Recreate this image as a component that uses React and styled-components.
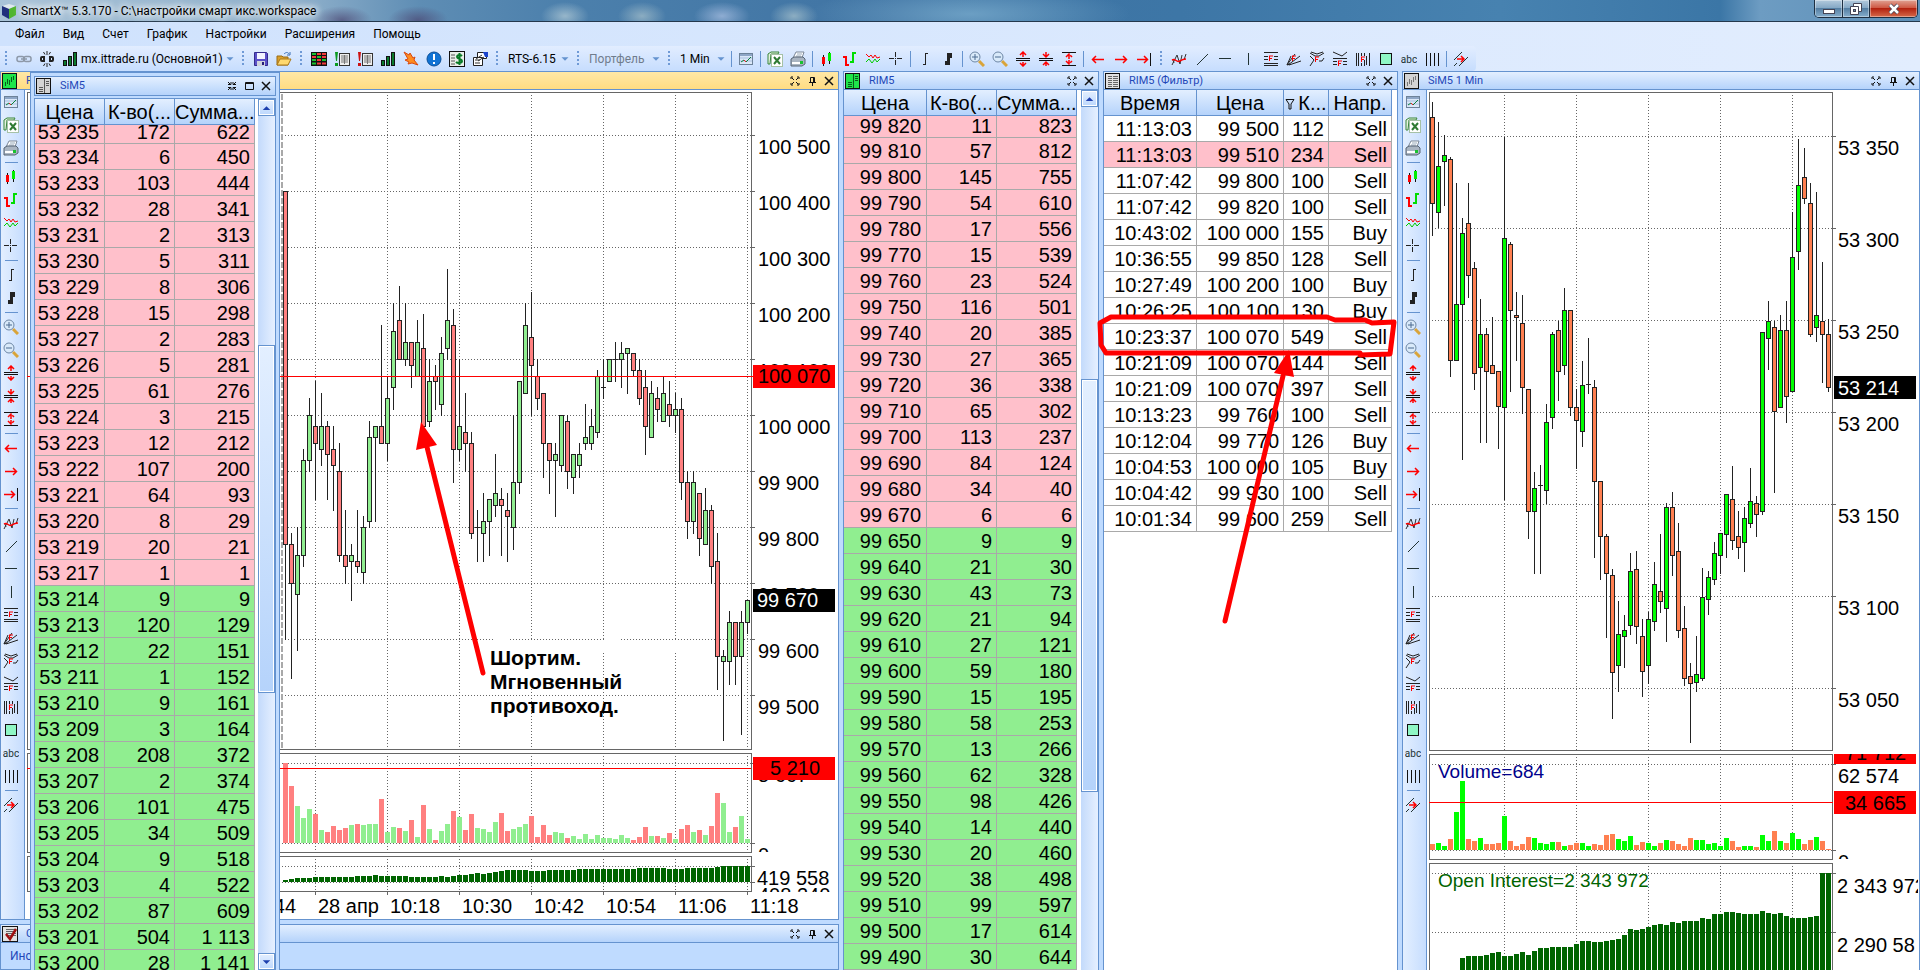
import React from 'react';
import styled, { createGlobalStyle } from 'styled-components';

const GlobalStyle = createGlobalStyle`
* { box-sizing: border-box; }
body {
margin: 0;
overflow: hidden;
background: #bfdbff;
}
button, select {
font: inherit;
color: inherit;
}
`;

const UI_FONT = 'Roboto, "Noto Sans", sans-serif';
const DATA_FONT = '"Liberation Sans", Arial, sans-serif';
const LINE = '#6593cf';

const Page = styled.div`
display: flex;
flex-direction: column;
height: 100vh;
overflow: hidden;
font-family: ${UI_FONT};
font-size: 12px;
color: #000;
`;

const TitleBar = styled.header`
display: flex;
align-items: center;
flex: none;
height: 22px;
padding-left: 2px;
border-bottom: 1px solid #24384d;
background:
radial-gradient(ellipse 30px 14px at 342px 20px, #4b4470b0, transparent),
radial-gradient(ellipse 30px 14px at 418px 20px, #4b4470b0, transparent),
radial-gradient(ellipse 24px 14px at 565px 16px, #b9cfd8b0, transparent),
radial-gradient(ellipse 24px 14px at 642px 16px, #a9c2ccb0, transparent),
radial-gradient(ellipse 28px 14px at 722px 16px, #a6bde0c0, transparent),
radial-gradient(ellipse 24px 14px at 794px 16px, #adc6cfb0, transparent),
radial-gradient(ellipse 160px 30px at 970px 14px, #86b8d6a0, transparent),
linear-gradient(90deg, #a9c3d8 0, #8fb0cb 300px, #5e8db4 420px, #4c80ac 560px, #3f73a3 900px, #3d76a6 1180px, #4782b0 1500px, #3b76a6 1720px, #6d9cc2 1760px, #5d8fb8 100%);
`;
const TitleLogo = styled.svg`
width: 14px;
height: 16px;
`;
const WindowTitle = styled.h1`
flex: 1;
margin: 0 0 0 5px;
font-size: 12px;
line-height: 20px;
font-weight: normal;
text-shadow: 0 0 6px #fff, 0 0 8px #fff, 0 0 10px #fff;
`;
const WindowButtons = styled.div`
display: flex;
align-self: flex-start;
height: 18px;
margin-right: 2px;
border: 1px solid #1d2f42;
border-top: 0;
border-radius: 0 0 5px 5px;
overflow: hidden;
`;
const WindowButton = styled.button`
display: flex;
align-items: center;
justify-content: center;
width: ${(props) => (props.$close ? '48px' : '27px')};
padding: 0;
border: 0;
border-left: ${(props) => (props.$first ? '0' : '1px solid #1d2f42')};
background: ${(props) => (props.$close
    ? 'linear-gradient(#e0a293, #cf5a45 45%, #b3220f 50%, #d5694a)'
    : 'linear-gradient(#b3cadd, #86a9c6 45%, #557fa3 50%, #86aecd)')};
box-shadow: inset 0 0 0 1px #ffffff60;
`;

const MenuBar = styled.nav`
display: flex;
align-items: center;
flex: none;
height: 24px;
padding: 0 6px;
background: linear-gradient(90deg, #cfe2fd, #e2edfe);
`;
const MenuItem = styled.button`
height: 22px;
padding: 0 9px;
border: 0;
background: transparent;
`;

const ToolBar = styled.div`
display: flex;
align-items: center;
flex: none;
height: 25px;
background: linear-gradient(90deg, #cfe2fd, #e2edfe);
`;
const ToolStrip = styled.div`
display: flex;
align-items: center;
height: 25px;
padding-right: 4px;
border-radius: 0 4px 4px 0;
background: linear-gradient(#e2edff, #c6ddfe);
`;
const ToolButton = styled.button`
display: flex;
align-items: center;
justify-content: center;
flex: none;
width: 23px;
height: 23px;
padding: 0;
border: 0;
background: transparent;
`;
const Grip = styled.span`
flex: none;
width: 12px;
height: 16px;
background: repeating-linear-gradient(#6f9ad6 0 2px, transparent 2px 4px) center / 2px 15px no-repeat;
`;
const Divider = styled.span`
flex: none;
width: ${(props) => (props.$flat ? '13px' : '6px')};
height: ${(props) => (props.$flat ? '6px' : '16px')};
background: linear-gradient(${LINE}, ${LINE}) center / ${(props) => (props.$flat ? '13px 1px' : '1px 16px')} no-repeat;
`;
const Combo = styled.label`
display: flex;
align-items: center;
flex: none;
width: ${(props) => props.$width}px;
color: ${(props) => (props.$dim ? '#707c8c' : '#000')};
`;
const ComboSelect = styled.select`
flex: 1;
min-width: 0;
height: 20px;
padding: 0 0 0 ${(props) => (props.$flush ? '0' : '5px')};
border: 0;
background: transparent;
appearance: none;
`;

const Workspace = styled.main`
position: relative;
display: grid;
grid-template-columns: minmax(0, 839fr) 256px 295px minmax(0, 518fr);
column-gap: 4px;
flex: 1;
min-height: 0;
background: #bfdbff;
`;
const Column = styled.div`
position: relative;
display: flex;
flex-direction: column;
gap: 4px;
min-width: 0;
min-height: 0;
`;
const Panel = styled.section`
display: flex;
flex-direction: column;
flex: ${(props) => (props.$docked ? 'none' : '1')};
min-height: 0;
height: ${(props) => (props.$docked ? '46px' : 'auto')};
border: 1px solid ${LINE};
border-bottom-width: ${(props) => (props.$open ? '0' : '1px')};
background: ${(props) => (props.$docked ? '#bfdbff' : '#fff')};
`;
const PanelHeader = styled.div`
display: flex;
align-items: center;
flex: none;
height: 18px;
padding: 0 1px;
border-bottom: 1px solid ${LINE};
background: ${(props) => (props.$active
    ? 'linear-gradient(#ffe8a6, #ffdc82)'
    : 'linear-gradient(#e3efff, #b5d3fb)')};
`;
const PanelTitle = styled.h2`
flex: 1;
margin: 0 0 0 8px;
overflow: hidden;
font-size: 11px;
line-height: 16px;
font-weight: normal;
white-space: nowrap;
color: #1f48b8;
`;
const PanelButton = styled.button`
display: flex;
align-items: center;
justify-content: center;
width: 17px;
height: 16px;
padding: 0;
border: 0;
background: transparent;
`;
const PanelBody = styled.div`
display: flex;
flex: 1;
min-height: 0;
overflow: hidden;
`;
const TabLabel = styled.button`
align-self: flex-start;
height: 26px;
padding: 0 9px;
border: 0;
background: transparent;
color: #1f48b8;
`;

// The order book that floats over the left chart.
const FloatingWindow = styled.section`
position: absolute;
top: 1px;
bottom: 0;
left: 30px;
display: flex;
flex-direction: column;
gap: 2px;
width: 250px;
padding: 3px 3px 0;
border: 1px solid ${LINE};
border-bottom: 0;
background: #bfdbff;
`;
const FloatingHeader = styled(PanelHeader)`
height: 20px;
border: 1px solid ${LINE};
`;
const FloatingBody = styled(PanelBody)`
border: 1px solid ${LINE};
border-bottom: 0;
background: #fff;
`;

const SideTools = styled.div`
display: flex;
flex-direction: column;
align-items: center;
flex: none;
width: 24px;
padding-right: 3px;
border-right: 1px solid ${LINE};
background: linear-gradient(90deg, #e3efff, #c6ddfe);
`;

const TableArea = styled.div`
flex: 1;
min-width: 0;
overflow: hidden;
`;
const DataTable = styled.table`
table-layout: fixed;
width: ${(props) => props.$width}px;
border-collapse: separate;
border-spacing: 0;
font-family: ${DATA_FONT};
font-size: 20px;
`;
const HeadCell = styled.th`
height: 26px;
padding: 1px 0;
border-right: 1px solid ${LINE};
border-bottom: 1px solid ${LINE};
background: linear-gradient(#e3efff, #b5d3fb);
font-weight: normal;
line-height: 22px;
text-align: center;
white-space: nowrap;
`;
const Cell = styled.td`
height: ${(props) => props.$height || 26}px;
padding: 1px 4px 0 0;
border-right: 1px solid #a9a9a9;
border-bottom: 1px solid #a9a9a9;
background: ${(props) => props.$fill || '#fff'};
line-height: ${(props) => (props.$height ? props.$height * 2 - 26 : 24)}px;
text-align: right;
vertical-align: top;
white-space: nowrap;
&:first-child {
padding-right: ${(props) => (props.$wide ? '5px' : '4px')};
}
`;
const FilterMark = styled.svg`
width: 10px;
height: 12px;
margin-right: 3px;
`;

const ScrollTrack = styled.div`
display: flex;
flex-direction: column;
flex: none;
width: 17px;
background: linear-gradient(90deg, #c3dafb, #e6f0ff);
`;
const ScrollArrow = styled.button`
display: flex;
align-items: center;
justify-content: center;
flex: none;
height: 17px;
padding: 0;
border: 1px solid ${LINE};
box-shadow: inset 0 0 0 1px #fff;
background: linear-gradient(#e3efff, #bcd7fd);
`;
const ScrollSpace = styled.div`
flex: ${(props) => props.$grow};
`;
const ScrollThumb = styled.div`
flex: ${(props) => props.$grow};
border: 1px solid ${LINE};
box-shadow: inset 0 0 0 1px #fff;
background: linear-gradient(#e3efff, #b5d3fb);
`;

const ChartSvg = styled.svg`
flex: 1;
min-width: 0;
height: 100%;
font-family: ${DATA_FONT};
font-size: 20px;
`;
const Markup = styled.svg`
position: absolute;
top: 0;
left: 0;
width: 100%;
height: 100%;
overflow: visible;
pointer-events: none;
`;

/* ---------- icons, all on a 16x16 canvas ---------- */

const fibF = (x, y) => (
  <path d={`M${x} ${y}h4M${x + 0.5} ${y}v5M${x} ${y + 2.5}h3`} stroke="#f00" fill="none" />
);

const ICONS = {
  link: (
    <g fill="none" stroke="#8d98a8" strokeWidth="1.5">
      <rect x="1" y="5.5" width="7" height="5" rx="2" />
      <rect x="8" y="5.5" width="7" height="5" rx="2" />
      <path d="M5 8h6" />
    </g>
  ),
  unlink: (
    <g fill="none" stroke="#222" strokeWidth="2">
      <path d="M6 6H3a1 1 0 0 0-1 1v2a1 1 0 0 0 1 1h3M10 6h3a1 1 0 0 1 1 1v2a1 1 0 0 1-1 1h-3M4 8h2M10 8h2" />
      <path d="M8 0v4M4.500 1l1.500 2.500M11.500 1L10 3.500M8 12v4M4.500 15l1.500-2.500M11.500 15L10 12.500" strokeWidth="1" />
    </g>
  ),
  bars: (
    <g fill="#0a7a2b" stroke="#111">
      <rect x="1.5" y="9.5" width="3" height="5" />
      <rect x="6.5" y="5.5" width="3" height="9" />
      <rect x="11.5" y="1.5" width="3" height="13" />
    </g>
  ),
  save: (
    <g>
      <path d="M1.5 1.5h12l1 1v12h-13z" fill="#5a50c8" stroke="#332a8c" />
      <rect x="4" y="2" width="8" height="6" fill="#f2f4ff" />
      <rect x="4" y="10" width="8" height="5" fill="#cfd3dc" />
      <rect x="9" y="11" width="2" height="3" fill="#251c7a" />
    </g>
  ),
  open: (
    <g>
      <path d="M1 5h5l1 1h5v8H1z" fill="#d99f2b" stroke="#9a6a12" />
      <path d="M4 8h11l-3 6H1z" fill="#ffd970" stroke="#a9781b" />
      <path d="M8 3c2-2 4-2 5 0M14 1v3h-3" stroke="#3b71b8" fill="none" />
    </g>
  ),
  quotes: (
    <g>
      <rect x="0" y="1" width="16" height="14" fill="#111" />
      <path d="M1 3h4M1 9h4M1 12.500h4M6 6h4M11 9h4" stroke="#19c22f" strokeWidth="2" />
      <path d="M6 3h4M11 3h4M1 6h4M11 6h4M6 9h4M6 12.500h4M11 12.500h4" stroke="#f13b3b" strokeWidth="2" />
    </g>
  ),
  orderBuy: (
    <g>
      <rect x="5.5" y="2.5" width="10" height="12" fill="#eee" stroke="#333" />
      <path d="M7 5h7M7 7h7M7 9h7M7 11h7M10.5 4v9" stroke="#777" />
      <path d="M1 1h3l-1 9H2zM1 12h3v3H1z" fill="#0a9a20" />
    </g>
  ),
  orderSell: (
    <g>
      <rect x="5.5" y="2.5" width="10" height="12" fill="#eee" stroke="#333" />
      <path d="M7 5h7M7 7h7M7 9h7M7 11h7M10.5 4v9" stroke="#777" />
      <path d="M1 1h3l-1 9H2zM1 12h3v3H1z" fill="#c11" />
    </g>
  ),
  flash: <path d="M1 1l5 3 1-2 3 5 2-1-1 3 4 5-6-2-4 1 1-2-4-2 3-1z" fill="#ff8c1f" stroke="#d9480f" />,
  alert: (
    <g>
      <circle cx="8" cy="8" r="7" fill="#1173d4" stroke="#0b4f97" />
      <path d="M7 3h2v6H7zM7 11h2v2H7z" fill="#fff" />
    </g>
  ),
  money: (
    <g>
      <rect x="0.5" y="0.5" width="15" height="15" fill="#e9efe9" stroke="#111" />
      <path d="M2 4h4M2 7h4M2 10h4M2 13h4" stroke="#555" />
      <path d="M13 5c-2-2-5-1-5 1s5 2 5 4-4 3-6 1M10.500 2v12" stroke="#087a25" strokeWidth="2" fill="none" />
    </g>
  ),
  report: (
    <g>
      <path d="M5.500 1.500h9v6h-9z" fill="#fff" stroke="#222" />
      <path d="M11 1h5v5h-3z" fill="#1a43cc" />
      <path d="M1.500 6.500h9v8h-9z" fill="#fff" stroke="#222" />
      <path d="M3 9h5M3 12h5M4 8l6-4M6 10l6-4" stroke="#333" />
    </g>
  ),
  chartWindow: (
    <g>
      <rect x="1.500" y="2.500" width="13" height="11" fill="#dbe8f8" stroke="#6d8299" />
      <path d="M2 4h12" stroke="#8ea6c6" strokeWidth="2" />
      <path d="M2 7h12M2 10h12" stroke="#a9bfe0" />
      <path d="M3 11l3-2 2 2 5-5" stroke="#0b7f39" fill="none" />
      <path d="M6 9l2 2" stroke="#e22" />
    </g>
  ),
  excel: (
    <g>
      <path d="M4 1h8l-1 2H4L3 13H1V3z" fill="#e5f3e0" stroke="#38853b" />
      <rect x="4.500" y="3.500" width="11" height="12" fill="#fff" stroke="#a6c1a6" />
      <path d="M7 6l6 7M13 6l-6 7" stroke="#2f7a33" strokeWidth="2" />
    </g>
  ),
  printer: (
    <g>
      <path d="M6 1h8l-2 6H3z" fill="#fff" stroke="#7b8797" />
      <path d="M7 3h5M6 5h5" stroke="#9ab" />
      <path d="M1 8l3-2h9l2 2v5l-3 2H1z" fill="#aab5c2" stroke="#566474" />
      <path d="M2 12h9" stroke="#fff" strokeWidth="2" />
      <rect x="10" y="10" width="3" height="3" fill="#19c22f" />
    </g>
  ),
  candles: (
    <g>
      <path d="M4.500 4v11M10.500 1v12" stroke="#111" />
      <rect x="3" y="6" width="3" height="7" fill="#f00" />
      <rect x="9" y="2" width="3" height="8" fill="#0e0" />
    </g>
  ),
  ohlc: (
    <g fill="none" strokeWidth="2">
      <path d="M1 6h3M4 5v10M4 14h3" stroke="#f00" />
      <path d="M8 11h3M11 12V1M11 2h3" stroke="#0d0" />
    </g>
  ),
  zigzag: (
    <g fill="none">
      <path d="M1 3l3 3 2-2 2 3 2-3 2 3 3-1" stroke="#f00" />
      <path d="M1 11l3-3 3 4 3-4 2 3 3-3" stroke="#0c0" />
    </g>
  ),
  cross: <path d="M7.500 1v5M7.500 9v5M1 7.500h5M9 7.500h5M7 7.500h1" stroke="#222" />,
  thinBar: <path d="M8.500 2v12M8 2.500h3M6 13.500h3" stroke="#222" />,
  thickBar: <path d="M7 2h5v5h-2v7H5v-4h2z" fill="#222" />,
  zoomIn: (
    <g>
      <path d="M10 10l5 5" stroke="#d9a43a" strokeWidth="3" />
      <circle cx="6" cy="6" r="5" fill="#d9eafa" stroke="#6e87a5" />
      <path d="M6 3v6M3 6h6" stroke="#4a6a90" />
    </g>
  ),
  zoomOut: (
    <g>
      <path d="M10 10l5 5" stroke="#d9a43a" strokeWidth="3" />
      <circle cx="6" cy="6" r="5" fill="#d9eafa" stroke="#6e87a5" />
      <path d="M3 6h6" stroke="#4a6a90" />
    </g>
  ),
  expand: (
    <g fill="none">
      <path d="M1 7.500h14M1 9.500h14" stroke="#111" />
      <path d="M8 6V1M5 4l3-3 3 3M8 11v4M5 12l3 3 3-3" stroke="#f00" strokeWidth="1.500" />
    </g>
  ),
  shrink: (
    <g fill="none">
      <path d="M1 7.500h14M1 9.500h14" stroke="#111" />
      <path d="M8 1v5M5 3l3 3 3-3M8 15v-4M5 14l3-3 3 3" stroke="#f00" strokeWidth="1.500" />
    </g>
  ),
  fit: (
    <g fill="none">
      <path d="M1 1.500h14M1 14.500h14" stroke="#111" />
      <path d="M8 3v10M5 6l3-3 3 3M5 10l3 3 3-3" stroke="#f00" strokeWidth="1.500" strokeDasharray="5 1" />
    </g>
  ),
  left: <path d="M14 8.500H3M6 5L2.500 8.500 6 12" stroke="#f00" strokeWidth="1.500" fill="none" />,
  right: <path d="M2 8.500h11M10 5l3.500 3.500L10 12" stroke="#f00" strokeWidth="1.500" fill="none" />,
  end: (
    <g fill="none">
      <path d="M1 8.500h10M8 5l3.500 3.500L8 12" stroke="#f00" strokeWidth="1.500" />
      <path d="M14.500 2v13" stroke="#111" />
    </g>
  ),
  indicator: (
    <g fill="none">
      <path d="M1 14L6 4l3 9 2-9M13 9l2-6M2 9l1 3" stroke="#333" />
      <path d="M1 9c4-2 4 3 8 1s3-2 6-2" stroke="#f00" strokeWidth="1.500" />
    </g>
  ),
  segment: <path d="M3 14L14 3" stroke="#233" />,
  horizontal: <path d="M2 7.500h12" stroke="#233" />,
  vertical: <path d="M8.500 2v12" stroke="#233" />,
  fibLevels: (
    <g>
      <path d="M1 1.500h14M1 5.500h4M11 5.500h4M1 8.500h4M11 8.500h4M1 12.500h14M1 14.500h14" stroke="#222" />
      {fibF(6, 5)}
    </g>
  ),
  fibFan: (
    <g>
      <path d="M1 14l4-9M1 14L9 3M2 14l12-9M3 14l12-4M1 14l3-1" stroke="#222" fill="none" />
      {fibF(6, 5)}
    </g>
  ),
  fibArcs: (
    <g>
      <path d="M1 2l5 3h4l5-3M2 1l6 2 6-2M1 5l4 4-4 6M10 10h3l2-3" stroke="#222" fill="none" />
      {fibF(6, 6)}
    </g>
  ),
  fibExpansion: (
    <g>
      <path d="M1 1l9 4 5-4M1 7.500h14M1 10.500h4M11 10.500h4M1 13.500h4M11 13.500h4" stroke="#222" fill="none" />
      {fibF(6, 10)}
    </g>
  ),
  fibZones: (
    <g>
      <path d="M1.500 2v13M3.500 2v13M6.500 2v3M6.500 12v3M9.500 2v3M9.500 9v6M11.500 5v9M14.500 2v13" stroke="#222" />
      {fibF(6, 6)}
    </g>
  ),
  square: <rect x="2.500" y="2.500" width="11" height="11" fill="#8ff7c5" stroke="#111" />,
  label: <text x="8" y="12" textAnchor="middle" fontSize="10" fill="#233">abc</text>,
  periods: <path d="M2.500 2v13M6.500 2v13M10.500 2v13M14.500 2v13" stroke="#111" />,
  channel: (
    <g fill="none">
      <path d="M1 9l8-8M6 15l9-9M1 15l3-3" stroke="#233" />
      <path d="M4 8h7M8 5l3 3-3 3" stroke="#f00" strokeWidth="1.500" />
    </g>
  ),
  down: <path d="M4 6h8l-4 4z" fill="#6593cf" />,
  arrowUp: <path d="M4 10h8L8 6z" fill="#1d3fae" />,
  arrowDown: <path d="M4 6h8l-4 4z" fill="#1d3fae" />,
  maximize: <path d="M4 6V4h2M10 4h2v2M4 10v2h2M10 12h2v-2M5 5l2 2M11 5L9 7M5 11l2-2M11 11L9 9" stroke="#111" fill="none" />,
  restore: <path d="M4 6.500h3V4M12 6.500H9V4M4 9.500h3V12M12 9.500H9V12M4 4l2 2M12 4l-2 2M4 12l2-2M12 12l-2-2" stroke="#111" fill="none" />,
  box: <path d="M4.500 4.500h8v7h-8zM4 5.500h8" stroke="#111" fill="none" />,
  pin: <path d="M6.500 9V4.500h4V9M9.500 4v5M5 9.500h7M8.500 9v4" stroke="#111" fill="none" />,
  close: <path d="M4 4l8 8M12 4l-8 8" stroke="#111" strokeWidth="1.500" />,
  chartTab: (
    <g>
      <rect x="0.500" y="0.500" width="14" height="15" fill="#d4d4d4" stroke="#111" />
      <path d="M3.500 9v4M5.500 6v5M7.500 7v5M9.500 4v5M11.500 3v4" stroke="#777" />
    </g>
  ),
  chartTabOn: (
    <g>
      <rect x="0.500" y="0.500" width="14" height="15" fill="#1fe64a" stroke="#111" />
      <path d="M3.500 9v4M5.500 6v5M7.500 7v5M9.500 4v5M11.500 3v4" stroke="#0a5c1c" />
    </g>
  ),
  bookTab: (
    <g>
      <rect x="0.500" y="0.500" width="14" height="15" fill="#d4d4d4" stroke="#111" />
      <path d="M8.500 1v14M10 3.500h3M10 5.500h3M10 7.500h3M3 9.500h4M3 11.500h4M3 13.500h4" stroke="#555" />
    </g>
  ),
  bookTabOn: (
    <g>
      <rect x="0.500" y="0.500" width="14" height="15" fill="#1fe64a" stroke="#111" />
      <path d="M8.500 1v14M10 3.500h3M10 5.500h3M10 7.500h3M3 9.500h4M3 11.500h4M3 13.500h4" stroke="#0a5c1c" />
    </g>
  ),
  tableTab: (
    <g>
      <rect x="0.500" y="0.500" width="14" height="15" fill="#e2e2e2" stroke="#111" />
      <path d="M3 3.500h10M3 5.500h10M3 7.500h10M3 9.500h10M3 11.500h10M3 13.500h10" stroke="#666" />
      <path d="M7.500 2v13" stroke="#e2e2e2" />
    </g>
  ),
  ordersTab: (
    <g>
      <rect x="0.500" y="0.500" width="15" height="15" fill="#e2e2e2" stroke="#111" />
      <path d="M4 3.500h10M4 5.500h10M4 7.500h10M4 9.500h10" stroke="#666" />
      <path d="M4 8l4 5 6-10" stroke="#a01010" strokeWidth="2.500" fill="none" />
    </g>
  ),
};

function Icon({ name, size = 16 }) {
  return (
    <svg width={size} height={size} viewBox="0 0 16 16" aria-hidden="true">{ICONS[name]}</svg>
  );
}

/* ---------- toolbars ---------- */

const MENU = ['Файл', 'Вид', 'Счет', 'График', 'Настройки', 'Расширения', 'Помощь'];

// '|' stands for a divider, '.' for the grip of a new group.
const CHART_TOOLS = [
  'chartWindow', '|', 'excel', 'printer', '|', 'candles', 'ohlc', 'zigzag', 'cross', '|',
  'thinBar', 'thickBar', '|', 'zoomIn', 'zoomOut', 'expand', 'shrink', 'fit', '|',
  'left', 'right', 'end', '.', 'indicator', 'segment', 'horizontal', 'vertical', 'fibLevels',
  'fibFan', 'fibArcs', 'fibExpansion', 'fibZones', 'square', 'label', 'periods', '|', 'channel',
];
const SIDE_TOOLS = CHART_TOOLS
  .filter((name, index) => index !== 1)
  .map((name) => (name === '.' ? '|' : name));

function Tools({ names, flat }) {
  return names.map((name, index) => {
    if (name === '|') return <Divider key={index} $flat={flat} />;
    if (name === '.') return <Grip key={index} />;
    return <ToolButton key={index} type="button" aria-label={name}><Icon name={name} /></ToolButton>;
  });
}

function Picker({ name, value, width, dim, flush }) {
  return (
    <Combo $width={width} $dim={dim}>
      <ComboSelect aria-label={name} defaultValue={value} $flush={flush}>
        <option>{value}</option>
      </ComboSelect>
      <Icon name="down" size={14} />
    </Combo>
  );
}

function MainToolBar() {
  return (
    <ToolBar>
      <ToolStrip>
        <Grip />
        <Tools names={['link', 'unlink', 'bars']} />
        <Picker name="Сервер" value="mx.ittrade.ru (Основной1)" width={156} flush />
        <Tools names={['.', 'save', 'open', '.', 'quotes', 'orderBuy', 'orderSell', 'bars', 'flash', 'alert', 'money', 'report', '.']} />
        <Picker name="Инструмент" value="RTS-6.15" width={69} />
        <Grip />
        <Picker name="Портфель" value="Портфель" width={79} dim />
        <Grip />
        <Picker name="Интервал" value="1 Min" width={53} />
        <Divider />
        <Tools names={CHART_TOOLS} />
      </ToolStrip>
    </ToolBar>
  );
}

function HeaderParts({ icon, title, buttons }) {
  return (
    <>
      <Icon name={icon} />
      <PanelTitle>{title}</PanelTitle>
      {buttons.map((name) => (
        <PanelButton key={name} type="button" aria-label={name}><Icon name={name} /></PanelButton>
      ))}
    </>
  );
}

/* ---------- tables ---------- */

const ASK = '#ffc0cb';
const BID = '#90ee90';

const SIM_BOOK = [
  ['53 235', '172', '622'], ['53 234', '6', '450'], ['53 233', '103', '444'], ['53 232', '28', '341'],
  ['53 231', '2', '313'], ['53 230', '5', '311'], ['53 229', '8', '306'], ['53 228', '15', '298'],
  ['53 227', '2', '283'], ['53 226', '5', '281'], ['53 225', '61', '276'], ['53 224', '3', '215'],
  ['53 223', '12', '212'], ['53 222', '107', '200'], ['53 221', '64', '93'], ['53 220', '8', '29'],
  ['53 219', '20', '21'], ['53 217', '1', '1'], ['53 214', '9', '9'], ['53 213', '120', '129'],
  ['53 212', '22', '151'], ['53 211', '1', '152'], ['53 210', '9', '161'], ['53 209', '3', '164'],
  ['53 208', '208', '372'], ['53 207', '2', '374'], ['53 206', '101', '475'], ['53 205', '34', '509'],
  ['53 204', '9', '518'], ['53 203', '4', '522'], ['53 202', '87', '609'], ['53 201', '504', '1 113'],
  ['53 200', '28', '1 141'],
];
const RIM_BOOK = [
  ['99 820', '11', '823'], ['99 810', '57', '812'], ['99 800', '145', '755'], ['99 790', '54', '610'],
  ['99 780', '17', '556'], ['99 770', '15', '539'], ['99 760', '23', '524'], ['99 750', '116', '501'],
  ['99 740', '20', '385'], ['99 730', '27', '365'], ['99 720', '36', '338'], ['99 710', '65', '302'],
  ['99 700', '113', '237'], ['99 690', '84', '124'], ['99 680', '34', '40'], ['99 670', '6', '6'],
  ['99 650', '9', '9'], ['99 640', '21', '30'], ['99 630', '43', '73'], ['99 620', '21', '94'],
  ['99 610', '27', '121'], ['99 600', '59', '180'], ['99 590', '15', '195'], ['99 580', '58', '253'],
  ['99 570', '13', '266'], ['99 560', '62', '328'], ['99 550', '98', '426'], ['99 540', '14', '440'],
  ['99 530', '20', '460'], ['99 520', '38', '498'], ['99 510', '99', '597'], ['99 500', '17', '614'],
  ['99 490', '30', '644'],
];
const TRADES = [
  ['11:13:03', '99 500', '112', 'Sell'], ['11:13:03', '99 510', '234', 'Sell'],
  ['11:07:42', '99 800', '100', 'Sell'], ['11:07:42', '99 820', '100', 'Sell'],
  ['10:43:02', '100 000', '155', 'Buy'], ['10:36:55', '99 850', '128', 'Sell'],
  ['10:27:49', '100 200', '100', 'Buy'], ['10:26:25', '100 100', '130', 'Buy'],
  ['10:23:37', '100 070', '549', 'Sell'], ['10:21:09', '100 070', '144', 'Sell'],
  ['10:21:09', '100 070', '397', 'Sell'], ['10:13:23', '99 760', '100', 'Sell'],
  ['10:12:04', '99 770', '126', 'Buy'], ['10:04:53', '100 000', '105', 'Buy'],
  ['10:04:42', '99 930', '100', 'Sell'], ['10:01:34', '99 600', '259', 'Sell'],
];

function OrderBook({ rows, asks, widths, firstHeight }) {
  return (
    <TableArea>
      <DataTable $width={widths.reduce((a, b) => a + b)}>
        <colgroup>{widths.map((width, index) => <col key={index} width={width} />)}</colgroup>
        <thead>
          <tr>
            <HeadCell>Цена</HeadCell>
            <HeadCell>К-во(...</HeadCell>
            <HeadCell>Сумма...</HeadCell>
          </tr>
        </thead>
        <tbody>
          {rows.map((row, index) => (
            <tr key={row[0]}>
              {row.map((value, column) => (
                <Cell key={column} $wide $fill={index < asks ? ASK : BID} $height={index === 0 ? firstHeight : 0}>{value}</Cell>
              ))}
            </tr>
          ))}
        </tbody>
      </DataTable>
    </TableArea>
  );
}

function TradeTable() {
  const widths = [93, 87, 45, 63];
  return (
    <TableArea>
      <DataTable $width={288}>
        <colgroup>{widths.map((width) => <col key={width} width={width} />)}</colgroup>
        <thead>
          <tr>
            <HeadCell>Время</HeadCell>
            <HeadCell>Цена</HeadCell>
            <HeadCell>
              <FilterMark viewBox="0 0 10 12" aria-hidden="true">
                <path d="M1 1.500h8L6 6v5M1 1.500L4 6v5h2" stroke="#111" fill="none" />
              </FilterMark>
              К...
            </HeadCell>
            <HeadCell>Напр.</HeadCell>
          </tr>
        </thead>
        <tbody>
          {TRADES.map((row, index) => (
            <tr key={index}>
              {row.map((value, column) => (
                <Cell key={column} $fill={index === 1 ? ASK : '#fff'}>{value}</Cell>
              ))}
            </tr>
          ))}
        </tbody>
      </DataTable>
    </TableArea>
  );
}

function ScrollBar({ before, thumb, after, closed }) {
  return (
    <ScrollTrack>
      <ScrollArrow type="button" aria-label="Вверх"><Icon name="arrowUp" /></ScrollArrow>
      <ScrollSpace $grow={before} />
      <ScrollThumb $grow={thumb} />
      <ScrollSpace $grow={after} />
      {closed ? <ScrollArrow type="button" aria-label="Вниз"><Icon name="arrowDown" /></ScrollArrow> : null}
    </ScrollTrack>
  );
}

/* ---------- charts ---------- */

// [rising, high, body top, body bottom, low], in tens of points from 100 000
const RIM_CANDLES = [
  [0, 40, 40, -23, -40], [0, -21, -23, -30, -47], [1, -20, -25, -32, -42], [1, -6, -8, -25, -27],
  [1, 3, 0, -8, -10], [0, 6, -2, -5, -15], [1, 4, -2, -6, -9], [0, -1, -2, -7, -15],
  [0, -2, -6, -9, -17], [0, -5, -10, -25, -26], [0, -17, -25, -27, -30], [1, -23, -25, -26, -33],
  [0, -17, -26, -27, -28], [1, -18, -20, -28, -30], [1, -1, -4, -19, -20], [1, -2, -2, -4, -19],
  [0, 16, -2, -5, -5], [1, 7, 3, -5, -8], [1, 20, 15, 5, 1], [0, 23, 17, 10, 10],
  [1, 20, 13, 10, 9], [0, 13, 13, 9, 5], [1, 17, 13, 7, 7], [0, 18, 12, -2, -2],
  [1, 10, 6, -1, -2], [0, 9, 7, 6, 1], [1, 14, 11, 2, 0], [1, 26, 17, 12, 10],
  [0, 19, 16, -6, -12], [1, 10, -2, -6, -8], [0, 4, -3, -5, -10], [0, -3, -5, -21, -22],
  [0, -17, -20, -20, -26], [1, -14, -19, -21, -26], [1, -15, -15, -19, -25], [1, -7, -14, -16, -18],
  [0, -13, -15, -16, -25], [0, -14, -17, -18, -26], [1, 0, -12, -20, -24], [1, 6, 6, -12, -14],
  [1, 20, 16, 4, 4], [0, 22, 14, 9, 0], [0, 10, 7, 3, 1], [0, 4, 4, -5, -11],
  [0, -5, -5, -8, -14], [1, -5, -7, -8, -18], [1, 0, 0, -9, -10], [0, 0, -1, -10, -13],
  [1, -7, -7, -11, -14], [1, -5, -7, -9, -11], [1, 2, -4, -5, -6], [1, 1, -2, -5, -6],
  [1, 8, 7, -3, -4], [0, 10, 5, 5, 3], [1, 10, 10, 6, 6], [0, 13, 10, 10, 6],
  [1, 13, 11, 10, 5], [1, 12, 12, 11, 4], [0, 11, 11, 8, 7], [0, 10, 8, 3, 2],
  [0, 8, 5, -2, -7], [1, 6, 4, -4, -4], [0, 5, 3, 1, -1], [1, 7, 4, -1, -1],
  [0, 6, 2, 0, -2], [1, 4, 1, 0, -3], [0, 3, 1, -12, -15], [0, -10, -12, -19, -22],
  [1, -10, -12, -19, -21], [0, -14, -14, -22, -25], [1, -13, -17, -23, -23], [0, -16, -17, -27, -30],
  [0, -21, -26, -43, -49], [1, -42, -43, -44, -58], [1, -35, -37, -44, -48], [0, -37, -37, -43, -48],
  [1, -35, -37, -43, -57], [1, -33, -33, -37, -39],
];
// bar heights, negative for a falling bar
const RIM_VOLUME = [
  -80, -57, 37, 25, 34, -29, 13, -11, -17, -13, -15, 18, -19, 18, 19, 19, -44, 11, 16, -15, 12, -23, 6, -38, 14,
  -3, 12, 19, -32, 26, -13, -29, 15, 14, 11, 21, -30, -12, 14, 16, 19, -27, -6, -18, -8, 11, 10, -5, 7, 4, 9, 4,
  8, 5, 5, 4, 8, 5, -3, -6, -16, 7, -7, 5, -10, 4, -14, -18, 11, -13, 8, -17, -50, 40, 11, -16, 27, 4,
];
const RIM_INTEREST = [
  2, 3, 4, 4, 4, 5, 5, 5, 5, 5, 5, 5, 6, 6, 6, 7, 6, 6, 6, 6, 6, 5, 5, 5, 5, 5, 6, 5, 6, 7, 7, 8, 9, 8, 9, 10,
  11, 12, 12, 12, 12, 11, 11, 11, 12, 12, 12, 12, 12, 13, 13, 13, 13, 13, 13, 13, 13, 13, 13, 14, 14, 14, 14,
  14, 13, 13, 13, 14, 14, 14, 14, 14, 15, 16, 16, 16, 16, 16,
];

// in points from 53 250
const SIM_CANDLES = [
  [0, 119, 111, 64, 47], [1, 108, 84, 59, 51], [1, 101, 90, 87, 63], [0, 89, 88, -21, -30],
  [1, 75, 9, -21, -21], [1, 56, 48, 9, -75], [0, 75, 53, 25, 13], [0, 32, 29, -28, -37],
  [1, 12, -7, -25, -66], [0, -4, -7, -27, -66], [0, 2, -24, -28, -28], [0, -27, -27, -46, -69],
  [1, 100, 45, -47, -97], [0, 43, 42, 6, -38], [0, 16, 3, 2, -21], [0, 14, -1, -36, -50],
  [0, -37, -37, -103, -118], [1, -82, -91, -103, -137], [0, -78, -89, -89, -137], [1, -45, -55, -92, -99],
  [1, -6, -7, -52, -58], [0, 0, -5, -27, -43], [1, 18, 6, -24, -29], [0, 6, 6, -47, -51],
  [0, -37, -47, -54, -80], [1, -22, -35, -60, -68], [0, -9, -34, -34, -39], [0, -32, -36, -87, -128],
  [0, -87, -87, -117, -140], [0, -116, -117, -137, -172], [0, -135, -138, -191, -216], [1, -152, -170, -187, -201],
  [1, -160, -168, -171, -188], [1, -126, -136, -165, -170], [0, -125, -135, -166, -175], [0, -162, -171, -190, -204],
  [1, -158, -162, -187, -197], [1, -131, -143, -163, -168], [0, -116, -147, -152, -158], [1, -99, -101, -156, -174],
  [0, -93, -101, -127, -138], [0, -110, -125, -168, -172], [0, -155, -167, -194, -198], [0, -186, -193, -197, -229],
  [1, -171, -192, -196, -201], [1, -134, -150, -194, -195], [1, -136, -139, -151, -159], [1, -120, -126, -140, -143],
  [1, -115, -115, -127, -137], [1, -94, -94, -116, -128], [0, -79, -97, -119, -124], [0, -103, -117, -123, -129],
  [1, -101, -107, -120, -136], [1, -80, -98, -110, -112], [0, -95, -99, -105, -117], [1, -6, -6, -103, -105],
  [1, 11, 0, -9, -26], [0, 0, -3, -49, -93], [1, 3, -5, -47, -47], [0, 11, -5, -41, -55],
  [1, 59, 35, -38, -38], [1, 99, 74, 38, 28], [0, 94, 78, 67, 64], [0, 75, 64, -7, -8],
  [1, 70, 3, -3, -11], [0, 32, 0, -7, -33], [0, 1, -7, -36, -38],
];
const SIM_VOLUME = [
  -6, 7, 4, -11, 38, 69, -11, -9, 12, -6, -6, -7, 34, -9, -4, -6, -13, 12, 7, 6, 8, -8, 4, -5, -7, 7, 4, -6, -5,
  -15, -16, 11, 9, 14, -5, -8, 7, 4, -7, 10, -9, -6, -4, -12, 10, 10, 6, 7, 4, 12, -9, -3, 4, 4, -3, 15, 9, -19,
  9, -7, 17, 11, -6, -10, 13, -9, -1,
];
const SIM_INTEREST = [
  0, 0, 0, 0, 0, 12, 14, 14, 14, 15, 17, 18, 14, 14, 16, 18, 15, 19, 22, 22, 23, 23, 23, 23, 26, 29, 29, 28, 28,
  29, 30, 31, 35, 41, 40, 41, 43, 45, 46, 45, 48, 47, 49, 49, 49, 52, 51, 56, 56, 58, 58, 57, 56, 56, 56, 59, 57,
  56, 57, 54, 52, 52, 52, 53, 54, 97, 97,
];

function Candles({ data, x, toY, up, down }) {
  return data.map(([rising, high, top, bottom, low], index) => {
    const cx = x + index * 6;
    const y = toY(top);
    const height = toY(bottom) - y + 1;
    return (
      <g key={index}>
        <rect x={cx} y={toY(high)} width="1" height={toY(low) - toY(high) + 1} fill="#222" />
        <rect x={cx - 2} y={y} width="5" height={height} fill="#222" />
        {height > 2 ? <rect x={cx - 1} y={y + 1} width="3" height={height - 2} fill={rising ? up : down} /> : null}
      </g>
    );
  });
}

function Histogram({ data, x, base, up, down }) {
  return data.map((value, index) => (
    <rect
      key={index}
      x={x + index * 6 - 2}
      y={base - Math.abs(value)}
      width="5"
      height={Math.abs(value)}
      fill={value > 0 ? up : down}
    />
  ));
}

// One framed pane with its dotted grid and the ticks at its right side.
function Pane({ right, top, bottom, columns, rows }) {
  return (
    <g stroke="#666" fill="none">
      {columns.map((x) => <path key={x} d={`M${x + 0.5} ${top + 3}V${bottom}`} strokeDasharray="1 2" />)}
      {rows.map((y) => (
        <g key={y}>
          <path d={`M5 ${y + 0.5}H${right}`} strokeDasharray="1 2" />
          <path d={`M${right} ${y + 0.5}h4`} />
        </g>
      ))}
      <rect x="2.5" y={top + 0.5} width={right - 2} height={bottom - top} />
    </g>
  );
}

function Badge({ x, y, height = 23, fill, color, textX, baseline, children }) {
  return (
    <svg x={x} y={y} width="82" height={height}>
      <rect width="82" height={height} fill={fill} />
      <text x={textX} y={baseline || 18} fill={color}>{children}</text>
    </svg>
  );
}

const columnsFrom = (start, count) => Array.from({ length: count }, (_, index) => start + index * 72);

function RimChart() {
  const columns = columnsFrom(218, 8);
  const prices = ['100 500', '100 400', '100 300', '100 200', '100 100', '100 000', '99 900', '99 800', '99 700', '99 600', '99 500'];
  const rows = prices.map((_, index) => 45 + index * 56);
  const times = ['09:44', '28 апр', '10:18', '10:30', '10:42', '10:54', '11:06', '11:18'];
  const colors = { up: '#90ee90', down: '#ff8080' };
  return (
    <ChartSvg shapeRendering="crispEdges" role="img" aria-label="RIM5 1 Min">
      <Pane right={726} top={2} bottom={659} columns={columns} rows={rows} />
      <Pane right={726} top={663} bottom={762} columns={columns} rows={[673, 753]} />
      <Pane right={726} top={766} bottom={801} columns={columns} rows={[776, 792]} />
      <path d="M257 4V659" stroke="#a9a9a9" strokeWidth="2" strokeDasharray="6 2" />
      <g fill="#fff">
        <rect x="469" y="548" width="16" height="3" />
        <rect x="579" y="548" width="17" height="3" />
        <rect x="505" y="551" width="3" height="42" />
        <rect x="577" y="551" width="3" height="12" />
        <rect x="649" y="551" width="3" height="12" />
      </g>
      <Candles data={RIM_CANDLES} x={260} toY={(value) => Math.round(325 - value * 5.6)} {...colors} />
      <Histogram data={RIM_VOLUME} x={260} base={753} {...colors} />
      <Histogram data={RIM_INTEREST} x={260} base={792} up="#006400" />
      <path d="M2 286.5H728M2 678.5H726" stroke="#f00" />
      {prices.map((price, index) => <text key={price} x="733" y={rows[index] + 19}>{price}</text>)}
      <text x="733" y="692">5 667</text>
      <svg x="728" y="755" width="90" height="7"><text x="5" y="17">0</text></svg>
      <text x="732" y="795">419 558</text>
      <svg x="728" y="797" width="90" height="5"><text x="5" y="15">408 240</text></svg>
      <Badge x={728} y={275} fill="#f00" textX={5}>100 070</Badge>
      <Badge x={728} y={499} fill="#000" color="#fff" textX={4}>99 670</Badge>
      <Badge x={728} y={667} fill="#f00" textX={17}>5 210</Badge>
      {columns.map((x, index) => (
        <g key={x}>
          <path d={`M${x + 0.5} 801v4`} stroke="#666" />
          <text x={x + 3} y="823">{times[index]}</text>
        </g>
      ))}
      <g shapeRendering="auto">
        <path d="M458 583L401 353" stroke="#f00" strokeWidth="5" strokeLinecap="round" />
        <path d="M396 332L391 360L412 355z" fill="#f00" />
      </g>
      <g fontWeight="bold" fontSize="21">
        <text x="465" y="575">Шортим.</text>
        <text x="465" y="599">Мгновенный</text>
        <text x="465" y="623">противоход.</text>
      </g>
    </ChartSvg>
  );
}

function SimChart() {
  const columns = columnsFrom(77, 5);
  const prices = ['53 350', '53 300', '53 250', '53 200', '53 150', '53 100', '53 050'];
  const rows = prices.map((_, index) => 46 + index * 92);
  const colors = { up: '#00ff00', down: '#ff7f50' };
  return (
    <ChartSvg shapeRendering="crispEdges" role="img" aria-label="SiM5 1 Min">
      <Pane right={405} top={2} bottom={660} columns={columns} rows={rows} />
      <Pane right={405} top={664} bottom={769} columns={columns} rows={[674, 760]} />
      <Pane right={405} top={773} bottom={900} columns={columns} rows={[783, 842]} />
      <Candles data={SIM_CANDLES} x={5} toY={(value) => Math.round(231 - value * 1.84)} {...colors} />
      <Histogram data={SIM_VOLUME} x={5} base={760} {...colors} />
      <Histogram data={SIM_INTEREST} x={5} base={880} up="#006400" />
      <path d="M2 712.5H406" stroke="#f00" />
      {prices.map((price, index) => <text key={price} x="411" y={rows[index] + 19}>{price}</text>)}
      <text x="411" y="693">62 574</text>
      <svg x="407" y="763" width="90" height="6"><text x="4" y="16">0</text></svg>
      <svg x="407" y="780" width="84" height="100">
        <text x="3" y="23">2 343 972</text>
        <text x="3" y="82">2 290 58</text>
      </svg>
      <Badge x={407} y={286} fill="#000" color="#fff" textX={4} baseline={19}>53 214</Badge>
      <Badge x={407} y={664} height={10} fill="#f00" textX={11} baseline={6}>71 712</Badge>
      <Badge x={407} y={701} fill="#f00" textX={11} baseline={19}>34 665</Badge>
      <g fontSize="19">
        <text x="11" y="688" fill="#00008b">Volume=684</text>
        <text x="11" y="797" fill="#006400">Open Interest=2 343 972</text>
      </g>
    </ChartSvg>
  );
}

function ChartPanel({ icon, title, active, open, children }) {
  return (
    <Panel $open={open}>
      <PanelHeader $active={active}>
        <HeaderParts icon={icon} title={title} buttons={['maximize', 'pin', 'close']} />
      </PanelHeader>
      <PanelBody>
        <SideTools>
          <Tools names={SIDE_TOOLS} flat />
        </SideTools>
        {children}
      </PanelBody>
    </Panel>
  );
}

function App() {
  return (
    <Page>
      <GlobalStyle />
      <TitleBar>
        <TitleLogo viewBox="0 0 14 16" aria-hidden="true">
          <path d="M0 3l7-2 7 2-7 3z" fill="#dfe8ee" />
          <path d="M0 3l7 3v10l-7-4z" fill="#20307c" />
          <path d="M14 3L7 6v10l7-4z" fill="#4fb52e" />
        </TitleLogo>
        <WindowTitle>SmartX™ 5.3.170 - C:\настройки смарт икс.workspace</WindowTitle>
        <WindowButtons>
          <WindowButton type="button" aria-label="Свернуть" $first>
            <svg width="14" height="12"><rect x="1.5" y="6.5" width="11" height="4" fill="#fff" stroke="#445" /></svg>
          </WindowButton>
          <WindowButton type="button" aria-label="Восстановить">
            <svg width="14" height="12" fill="#fff" stroke="#445">
              <path d="M4.500.5h8v8h-8z" />
              <path d="M1.500 3.500h8v8h-8z" />
              <rect x="4.500" y="6.500" width="2" height="2" fill="#6a90b0" />
            </svg>
          </WindowButton>
          <WindowButton type="button" aria-label="Закрыть" $close>
            <svg width="14" height="12">
              <path d="M3 2l8 8M11 2l-8 8" stroke="#445" strokeWidth="4" />
              <path d="M3 2l8 8M11 2l-8 8" stroke="#fff" strokeWidth="2.500" />
            </svg>
          </WindowButton>
        </WindowButtons>
      </TitleBar>
      <MenuBar>
        {MENU.map((name) => <MenuItem key={name} type="button">{name}</MenuItem>)}
      </MenuBar>
      <MainToolBar />
      <Workspace>
        <Column>
          <ChartPanel icon="chartTabOn" title="RIM5 1 Min" active>
            <RimChart />
          </ChartPanel>
          <Panel $docked>
            <PanelHeader>
              <HeaderParts icon="ordersTab" title="Список заявок" buttons={['maximize', 'pin', 'close']} />
            </PanelHeader>
            <TabLabel type="button">Инструмент</TabLabel>
          </Panel>
        </Column>
        <Panel $open>
          <PanelHeader>
            <HeaderParts icon="bookTabOn" title="RIM5" buttons={['maximize', 'close']} />
          </PanelHeader>
          <PanelBody>
            <OrderBook rows={RIM_BOOK} asks={16} widths={[83, 70, 80]} firstHeight={22} />
            <ScrollBar before={273} thumb={412} after={178} />
          </PanelBody>
        </Panel>
        <Column>
          <Panel $open>
            <PanelHeader>
              <HeaderParts icon="tableTab" title="RIM5 (Фильтр)" buttons={['maximize', 'close']} />
            </PanelHeader>
            <PanelBody>
              <TradeTable />
            </PanelBody>
          </Panel>
          <Markup aria-hidden="true">
            <path
              d="M-3 252L8 246H224L232 249H262L269 252L291 251L287 283L257 284V282H3L-2 274z"
              fill="none"
              stroke="#f00"
              strokeWidth="5"
              strokeLinejoin="round"
            />
            <path d="M122 550L180 305" stroke="#f00" strokeWidth="5" strokeLinecap="round" />
            <path d="M186 279L171 302L191 306z" fill="#f00" />
          </Markup>
        </Column>
        <ChartPanel icon="chartTab" title="SiM5 1 Min" open>
          <SimChart />
        </ChartPanel>
        <FloatingWindow>
          <FloatingHeader>
            <HeaderParts icon="bookTab" title="SiM5" buttons={['restore', 'box', 'close']} />
          </FloatingHeader>
          <FloatingBody>
            <OrderBook rows={SIM_BOOK} asks={18} widths={[70, 70, 80]} firstHeight={19} />
            <ScrollBar before={230} thumb={346} after={261} closed />
          </FloatingBody>
        </FloatingWindow>
      </Workspace>
    </Page>
  );
}

export default App;
